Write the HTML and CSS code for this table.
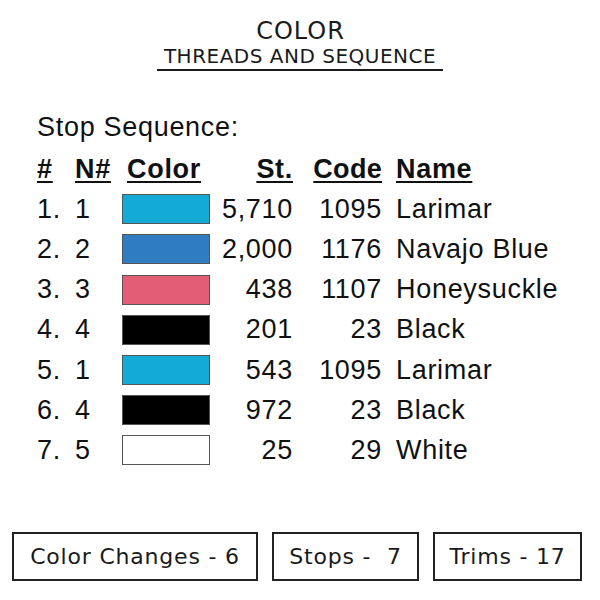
FILE: index.html
```html
<!DOCTYPE html>
<html>
<head>
<meta charset="utf-8">
<link rel="stylesheet" href="styles.css">
</head>
<body>
<div class="page">
  <header class="title">
    <div class="t1">COLOR</div>
    <div class="t2">THREADS AND SEQUENCE</div>
  </header>
  <div class="stop">Stop Sequence:</div>
  <div class="table">
    <div class="row head">
      <span class="c-num"><u>#</u></span>
      <span class="c-n"><u>N#</u></span>
      <span class="c-sw"><u>Color</u></span>
      <span class="c-st"><u>St.</u></span>
      <span class="c-code"><u>Code</u></span>
      <span class="c-name"><u>Name</u></span>
    </div>
    <div class="row"><span class="c-num">1.</span><span class="c-n">1</span><span class="c-sw"><i class="sw larimar"></i></span><span class="c-st">5,710</span><span class="c-code">1095</span><span class="c-name">Larimar</span></div>
    <div class="row"><span class="c-num">2.</span><span class="c-n">2</span><span class="c-sw"><i class="sw navajo"></i></span><span class="c-st">2,000</span><span class="c-code">1176</span><span class="c-name">Navajo Blue</span></div>
    <div class="row"><span class="c-num">3.</span><span class="c-n">3</span><span class="c-sw"><i class="sw honey"></i></span><span class="c-st">438</span><span class="c-code">1107</span><span class="c-name">Honeysuckle</span></div>
    <div class="row"><span class="c-num">4.</span><span class="c-n">4</span><span class="c-sw"><i class="sw black"></i></span><span class="c-st">201</span><span class="c-code">23</span><span class="c-name">Black</span></div>
    <div class="row"><span class="c-num">5.</span><span class="c-n">1</span><span class="c-sw"><i class="sw larimar"></i></span><span class="c-st">543</span><span class="c-code">1095</span><span class="c-name">Larimar</span></div>
    <div class="row"><span class="c-num">6.</span><span class="c-n">4</span><span class="c-sw"><i class="sw black"></i></span><span class="c-st">972</span><span class="c-code">23</span><span class="c-name">Black</span></div>
    <div class="row"><span class="c-num">7.</span><span class="c-n">5</span><span class="c-sw"><i class="sw white"></i></span><span class="c-st">25</span><span class="c-code">29</span><span class="c-name">White</span></div>
  </div>
  <div class="stats">
    <div class="box b1">Color Changes - 6</div>
    <div class="box b2">Stops -&nbsp; 7</div>
    <div class="box b3">Trims - 17</div>
  </div>
</div>
</body>
</html>
```
FILE: styles.css
```css
html, body { margin: 0; padding: 0; background: #fff; }
.page { width: 600px; height: 600px; position: relative; color: #111; }
.title { display: flex; flex-direction: column; align-items: center; padding-top: 18px; font-family: "DejaVu Sans", sans-serif; color: #1a1a1a; }
.t1 { font-size: 24px; line-height: 26px; letter-spacing: 1px; padding-left: 1px; }
.t2 { font-size: 20px; line-height: 24px; letter-spacing: 0.5px; width: 286px; text-align: center; border-bottom: 2px solid #1a1a1a; padding-bottom: 1px; }
.stop { font-family: "Liberation Sans", Arial, sans-serif; font-size: 27px; letter-spacing: 0.7px; margin: 41px 0 0 37px; line-height: 30px; }
.table { font-family: "Liberation Sans", Arial, sans-serif; font-size: 27px; letter-spacing: 0.7px; margin: 7px 0 0 37px; }
.row { display: flex; align-items: center; height: 40.2px; }
.head { font-weight: bold; }
.head u { text-decoration-thickness: 2px; text-underline-offset: 3px; }
.c-num { width: 38px; }
.c-n { width: 47px; }
.c-sw { width: 88px; display: flex; align-items: center; }
.head .c-sw { padding-left: 5px; width: 83px; }
.c-st { width: 83px; text-align: right; }
.c-code { width: 89px; text-align: right; }
.c-name { padding-left: 14px; white-space: nowrap; }
.head .c-code { letter-spacing: 0.3px; }
.sw { display: block; width: 86px; height: 28px; border: 1px solid #555; }
.larimar { background: #13aad6; }
.navajo { background: #2f7cc0; }
.honey { background: #e35d76; }
.black { background: #000; }
.white { background: #fff; }
.stats { position: absolute; left: 12px; top: 532px; display: flex; gap: 14px; font-family: "DejaVu Sans", sans-serif; font-size: 22px; letter-spacing: 0.8px; color: #1a1a1a; }
.box { height: 45px; border: 2px solid #222; display: flex; align-items: center; justify-content: center; box-sizing: content-box; }
.b1 { width: 242px; }
.b2 { width: 143px; }
.b3 { width: 145px; }
```
